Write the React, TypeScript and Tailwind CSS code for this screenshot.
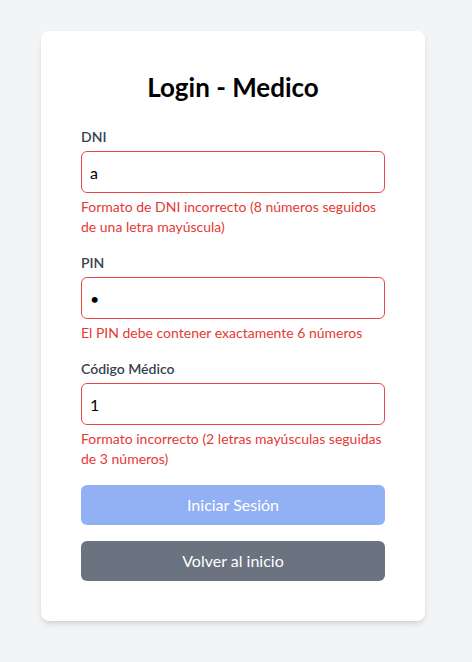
import React from "react";

export default function App() {
  const font = { fontFamily: '"Segoe UI", Lato, "Noto Sans", sans-serif' };
  return (
    <div className="min-h-[662px] w-full bg-[#f3f4f6] pt-[31px] pl-[41px]" style={font}>
      <div className="w-[384px] rounded-lg bg-white p-10 shadow-md">
        <h1 className="mb-6 text-center text-[26px] font-bold leading-8 text-black">Login - Medico</h1>
        <div className="mb-4">
          <label className="mb-1 block text-sm font-semibold leading-5 text-[#374151]">DNI</label>
          <input
            readOnly
            value="a"
            className="block h-[42px] w-full rounded-md border border-[#ef4444] px-2 text-base text-black outline-none"
          />
          <p className="mt-1 text-sm leading-5 text-[#e53935]">
            Formato de DNI incorrecto (8 números seguidos de una letra mayúscula)
          </p>
        </div>
        <div className="mb-4">
          <label className="mb-1 block text-sm font-semibold leading-5 text-[#374151]">PIN</label>
          <input
            readOnly
            type="password"
            value="a"
            className="block h-[42px] w-full rounded-md border border-[#ef4444] px-2 text-base text-black outline-none"
          />
          <p className="mt-1 text-sm leading-5 text-[#e53935]">El PIN debe contener exactamente 6 números</p>
        </div>
        <div className="mb-4">
          <label className="mb-1 block text-sm font-semibold leading-5 text-[#374151]">Código Médico</label>
          <input
            readOnly
            value="1"
            className="block h-[42px] w-full rounded-md border border-[#ef4444] px-2 text-base text-black outline-none"
          />
          <p className="mt-1 text-sm leading-5 text-[#e53935]">
            Formato incorrecto (2 letras mayúsculas seguidas de 3 números)
          </p>
        </div>
        <button className="block h-10 w-full rounded-md bg-[#92b1f5] text-base text-white">Iniciar Sesión</button>
        <button className="mt-4 block h-10 w-full rounded-md bg-[#6b7280] text-base text-white">Volver al inicio</button>
      </div>
    </div>
  );
}
